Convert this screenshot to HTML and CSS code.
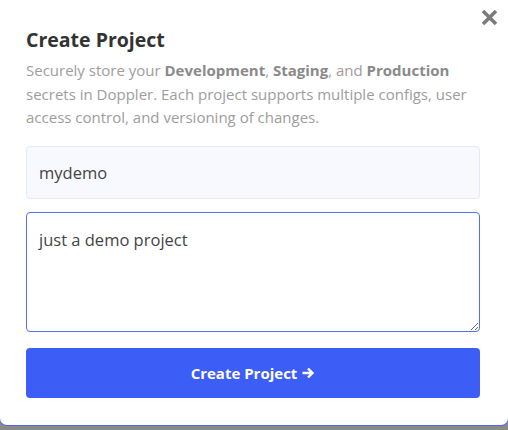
FILE: index.html
```html
<!DOCTYPE html>
<html lang="en">
<head>
    <meta charset="UTF-8">
    <meta name="viewport" content="width=device-width, initial-scale=1.0">
    <title>Create Project</title>
    <link rel="stylesheet" href="styles.css">
</head>
<body>

    <div class="modal">
        <button class="close" aria-label="Close">
            <svg width="17" height="17" viewBox="0 0 17 17">
                <path d="M2 2 L15 15 M15 2 L2 15" stroke="#7b7b7b" stroke-width="3.6" stroke-linecap="butt"/>
            </svg>
        </button>

        <h1>Create Project</h1>
        <p class="intro">
            Securely store your <b>Development</b>, <b>Staging</b>, and <b>Production</b>
            secrets in Doppler. Each project supports multiple configs, user
            access control, and versioning of changes.
        </p>

        <form class="project-form">
            <input type="text" class="field name" value="mydemo">
            <textarea class="field notes" autofocus>just a demo project</textarea>
            <button type="submit" class="submit">
                Create Project
                <svg width="14" height="14" viewBox="0 0 14 14">
                    <path d="M1.5 7 H11.5 M7 2.5 L11.5 7 L7 11.5" fill="none" stroke="#fff" stroke-width="2.4"/>
                </svg>
            </button>
        </form>
    </div>

    <script>
        // caret at the end of the notes, like the user just typed it
        const notes = document.querySelector(".notes");
        notes.focus();
        notes.setSelectionRange(notes.value.length, notes.value.length);
    </script>

</body>
</html>
```

FILE: styles.css
```css
body {
    margin: 0;
    background: #8a8a8a;
    font-family: "Open Sans", "Noto Sans", Arial, sans-serif;
    height: 430px;
    overflow: hidden;
}

.modal {
    position: relative;
    background: #fff;
    height: 425px;
    box-sizing: border-box;
    padding: 25px 28px 0 26px;
    border-radius: 0 0 7px 7px;
    box-shadow: 0 1px 0 #4a68f2;
}

.close {
    position: absolute;
    top: 9px;
    right: 10px;
    padding: 0;
    border: none;
    background: none;
    cursor: pointer;
    line-height: 0;
}

h1 {
    margin: 0;
    font-size: 19.5px;
    font-weight: 700;
    color: #333;
    line-height: 30px;
}

.intro {
    margin: 4px 0 0;
    font-size: 15px;
    line-height: 23.5px;
    color: #9d9d9d;
}

.intro b {
    color: #8a8a8a;
    font-weight: 700;
}

.project-form {
    display: flex;
    flex-direction: column;
    margin-top: 16px;
}

.field {
    font-family: inherit;
    color: #444;
    box-sizing: border-box;
    width: 100%;
    border-radius: 4px;
    outline: none;
}

.name {
    height: 53px;
    padding: 0 12px;
    font-size: 16.5px;
    background: #f8f9ff;
    border: 1px solid #e3e8fd;
}

.notes {
    margin-top: 13px;
    height: 120px;
    padding: 15px 12px;
    font-size: 16.5px;
    line-height: 24px;
    background: #fff;
    border: 1px solid #5570f0;
    resize: both;
}

.submit {
    margin-top: 16px;
    height: 50px;
    border: none;
    border-radius: 4px;
    background: #3c5df6;
    color: #fff;
    font-family: inherit;
    font-size: 15px;
    font-weight: 700;
    cursor: pointer;
    display: flex;
    align-items: center;
    justify-content: center;
    gap: 4px;
}
```
